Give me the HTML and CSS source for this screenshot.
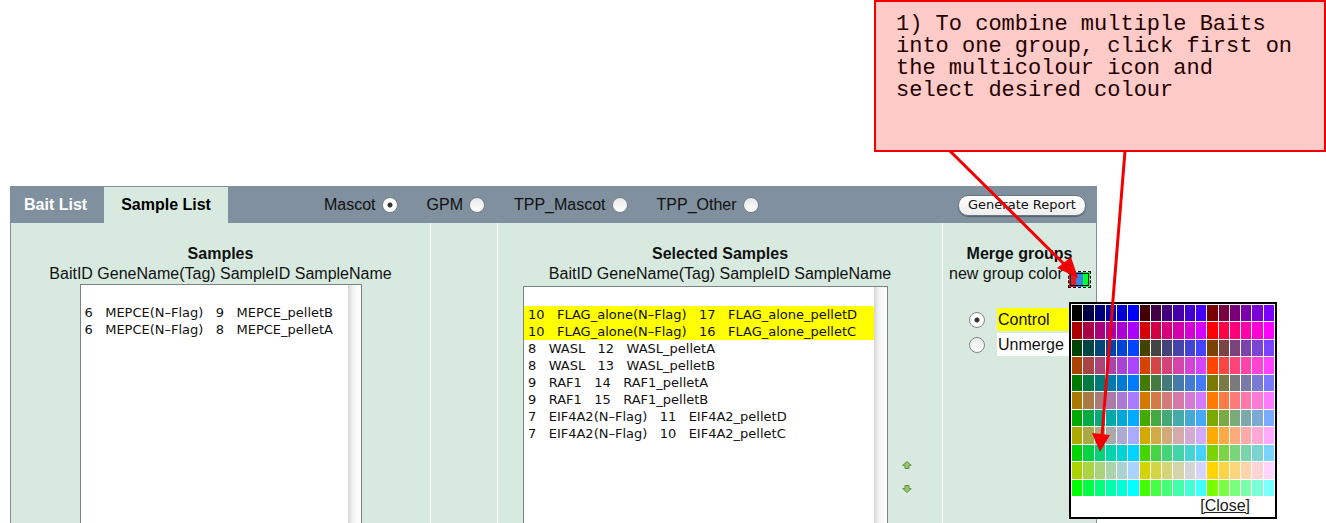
FILE: index.html
```html
<!DOCTYPE html>
<html lang="en">
<head>
<meta charset="utf-8">
<title>Sample List</title>
<link rel="stylesheet" href="styles.css">
</head>
<body>
<header class="note-row">
  <p class="note">1) To combine multiple Baits into one group, click first on the multicolour icon and select desired colour</p>
</header>
<main class="panel">
  <div class="bar">
    <nav class="tabs">
      <button class="tab" type="button">Bait List</button>
      <button class="tab tab-active" type="button">Sample List</button>
    </nav>
    <div class="engines">
      <label class="engine">Mascot <input class="radio" type="radio" name="engine" checked></label>
      <label class="engine">GPM <input class="radio" type="radio" name="engine"></label>
      <label class="engine">TPP_Mascot <input class="radio" type="radio" name="engine"></label>
      <label class="engine">TPP_Other <input class="radio" type="radio" name="engine"></label>
    </div>
    <button class="report" type="button">Generate Report</button>
  </div>
  <div class="columns">
    <section class="col">
      <h2 class="title">Samples</h2>
      <label class="subtitle" for="samples">BaitID GeneName(Tag) SampleID SampleName</label>
      <div class="listbox list-left">
        <select class="list" id="samples" multiple>
          <option>&nbsp;</option>
          <option>6&nbsp;&nbsp; MEPCE(N–Flag)&nbsp;&nbsp; 9&nbsp;&nbsp; MEPCE_pelletB</option>
          <option>6&nbsp;&nbsp; MEPCE(N–Flag)&nbsp;&nbsp; 8&nbsp;&nbsp; MEPCE_pelletA</option>
        </select>
      </div>
    </section>
    <div class="col"></div>
    <section class="col">
      <h2 class="title">Selected Samples</h2>
      <label class="subtitle" for="selected">BaitID GeneName(Tag) SampleID SampleName</label>
      <div class="selected-row">
        <div class="listbox list-right">
          <select class="list" id="selected" multiple>
            <option>&nbsp;</option>
            <option class="control">10&nbsp;&nbsp; FLAG_alone(N–Flag)&nbsp;&nbsp; 17&nbsp;&nbsp; FLAG_alone_pelletD</option>
            <option class="control">10&nbsp;&nbsp; FLAG_alone(N–Flag)&nbsp;&nbsp; 16&nbsp;&nbsp; FLAG_alone_pelletC</option>
            <option>8&nbsp;&nbsp; WASL&nbsp;&nbsp; 12&nbsp;&nbsp; WASL_pelletA</option>
            <option>8&nbsp;&nbsp; WASL&nbsp;&nbsp; 13&nbsp;&nbsp; WASL_pelletB</option>
            <option>9&nbsp;&nbsp; RAF1&nbsp;&nbsp; 14&nbsp;&nbsp; RAF1_pelletA</option>
            <option>9&nbsp;&nbsp; RAF1&nbsp;&nbsp; 15&nbsp;&nbsp; RAF1_pelletB</option>
            <option>7&nbsp;&nbsp; EIF4A2(N–Flag)&nbsp;&nbsp; 11&nbsp;&nbsp; EIF4A2_pelletD</option>
            <option>7&nbsp;&nbsp; EIF4A2(N–Flag)&nbsp;&nbsp; 10&nbsp;&nbsp; EIF4A2_pelletC</option>
          </select>
        </div>
        <div class="movers">
          <button class="mover" type="button" aria-label="Move up"><svg width="10" height="8" viewBox="0 0 10 8"><path d="M5 .5 9.3 4.3H7v3.2H3V4.3H.7z" fill="#9cc56f" stroke="#5f8f45"/></svg></button>
          <button class="mover" type="button" aria-label="Move down"><svg width="10" height="8" viewBox="0 0 10 8"><path d="M5 7.5.7 3.7H3V.5h4v3.2h2.3z" fill="#9cc56f" stroke="#5f8f45"/></svg></button>
        </div>
      </div>
    </section>
    <section class="col merge">
      <h2 class="title">Merge groups</h2>
      <div class="new-group">
        <span>new group color</span>
        <button class="swatch" type="button" aria-label="Choose group color"><i class="red"></i><i class="blue"></i><i class="green"></i></button>
      </div>
      <div class="groups">
        <label class="group"><input class="radio ring" type="radio" name="group" checked><span class="group-name control">Control</span></label>
        <label class="group"><input class="radio ring" type="radio" name="group"><span class="group-name">Unmerge</span></label>
      </div>
      <div class="picker">
        <div class="palette" id="palette"></div>
        <a class="close" href="#">[Close]</a>
      </div>
    </section>
  </div>
</main>
<svg class="pointers" width="452" height="523" viewBox="874 0 452 523" aria-hidden="true">
  <g stroke="#f00000" stroke-width="3" fill="none">
    <path d="M950 151 1067 267"/>
    <path d="M1125 151 1102 436"/>
  </g>
  <path fill="#f00000" d="M1078 278 1057 268 1071 257zM1100 452 1092 433 1110 435z"/>
</svg>
<script src="palette.js"></script>
</body>
</html>
```
FILE: styles.css
```css
* { box-sizing: border-box; }

body {
  position: relative;
  margin: 0;
  min-height: 100vh;
  overflow: hidden;
  display: flex;
  flex-direction: column;
  background: #fff;
  color: #111;
  font: 16px/20px "Liberation Sans", Arial, sans-serif;
}

button, select, input { margin: 0; padding: 0; font: inherit; color: inherit; }

.note-row { display: flex; justify-content: flex-end; margin-bottom: 34px; }
.note {
  width: 452px;
  min-height: 152px;
  margin: 0;
  padding: 12px 20px;
  border: 2px solid #f00000;
  background: #ffcbc8;
  color: #200;
  font: 22px/22px "Liberation Mono", "Courier New", monospace;
}

.panel {
  flex: 1;
  display: flex;
  flex-direction: column;
  margin: 0 229px 0 10px;
  border: solid #80909f;
  border-width: 1px 1px 0;
  background: #d8eae0;
}

.bar { display: flex; align-items: stretch; min-height: 36px; background: #80909f; }
.tabs { display: flex; }
.tab { padding: 0 17px 0 13px; border: 0; background: none; color: #fff; font-weight: bold; }
.tab-active { padding: 0 17px; background: #d8eae0; color: #000; }
.engines { display: flex; align-items: center; gap: 29px; margin-left: 96px; }
.engine { display: flex; align-items: center; gap: 6px; }

.radio {
  appearance: none;
  width: 16px;
  height: 16px;
  border: 1px solid #75808a;
  border-radius: 50%;
  background: linear-gradient(#e8e8e8, #fff);
}
.radio:checked { background: radial-gradient(circle, #333 0 2px, #fff 3px); }
.ring { border-color: #888; }

.report {
  align-self: center;
  margin-left: auto;
  margin-right: 10px;
  width: 128px;
  height: 21px;
  border: 1px solid #697580;
  border-radius: 10px;
  background: linear-gradient(#fff, #eee);
  box-shadow: 0 1px 1px #56616b;
  font: 13px/16px "DejaVu Sans", sans-serif;
}

.columns { flex: 1; display: grid; grid-template-columns: 419fr 67fr 445fr 154px; }
.col { display: flex; flex-direction: column; align-items: center; padding-top: 21px; min-width: 0; }
.col + .col { border-left: 1px solid #fff; }
.title { margin: 0; font-size: 16px; line-height: 20px; }

.listbox {
  display: flex;
  flex: 1;
  padding-right: 13px;
  border: 1px solid #7b8580;
  border-bottom: 0;
  background: linear-gradient(90deg, #d6d6d6, #f4f4f4 40%, #fff) right / 13px 100% no-repeat #fff;
}
.list-left { width: 282px; }
.list-right { flex: 0 0 365px; }
.list {
  width: 100%;
  border: 0;
  outline: 0;
  overflow: hidden;
  background: #fff;
  font: 13px/17px "DejaVu Sans", sans-serif;
}
.list option { min-height: 17px; padding: 1px 4px 0; color: #111; }
.list option:first-child { min-height: 19px; }
.control, .list option.control { background: #ff0; }

.selected-row { flex: 1; align-self: stretch; display: flex; gap: 13px; padding: 2px 0 0 25px; }
.movers { display: flex; flex-direction: column; gap: 12px; padding-top: 173px; }
.mover { display: flex; align-items: center; justify-content: center; width: 12px; height: 12px; border: 0; background: none; }

.merge { position: relative; }
.new-group { display: flex; align-self: stretch; gap: 5px; padding-left: 6px; white-space: nowrap; }
.swatch {
  display: flex;
  align-self: flex-end;
  flex: none;
  width: 23px;
  height: 17px;
  margin-bottom: -4px;
  border: 1px dashed #000;
  outline: 1px solid #000;
  outline-offset: -3px;
  background: #fff;
}
.swatch i { flex: 1; }
.red { background: #e01b24; }
.blue { background: #3584e4; }
.green { background: #0f3; }
.groups { align-self: stretch; display: flex; flex-direction: column; gap: 2px; padding: 24px 6px 0 26px; }
.group { display: flex; align-items: center; gap: 12px; }
.group-name { flex: 1; padding: 2px 1px 1px; }
.group-name:not(.control) { background: #fff; }

.picker {
  position: absolute;
  top: 79px;
  right: -181px;
  width: 208px;
  padding: 1px;
  border: 2px solid #000;
  background: #fff;
  text-align: right;
}
.palette { display: grid; grid-template: repeat(11, 1fr) / repeat(18, 1fr); gap: 1px; height: 191px; }
.cell { border: 0; min-width: 0; }
.close { display: block; padding-right: 24px; color: #222; }

.pointers { position: absolute; top: 0; right: 0; pointer-events: none; }
```
FILE: palette.js
```js
const levels = [0, 68, 122, 170, 212, 255];
const palette = document.getElementById("palette");

// Each row holds three red levels; the green level rises every second row.
for (let row = 0; row < 11; row++) {
  const green = levels[Math.floor(row / 2)];
  for (let col = 0; col < 18; col++) {
    const red = levels[(row % 2) * 3 + Math.floor(col / 6)];
    const blue = levels[col % 6];
    const cell = document.createElement("button");
    cell.type = "button";
    cell.className = "cell";
    cell.ariaLabel = `Color ${red}, ${green}, ${blue}`;
    cell.style.background = `rgb(${red}, ${green}, ${blue})`;
    palette.append(cell);
  }
}
```
